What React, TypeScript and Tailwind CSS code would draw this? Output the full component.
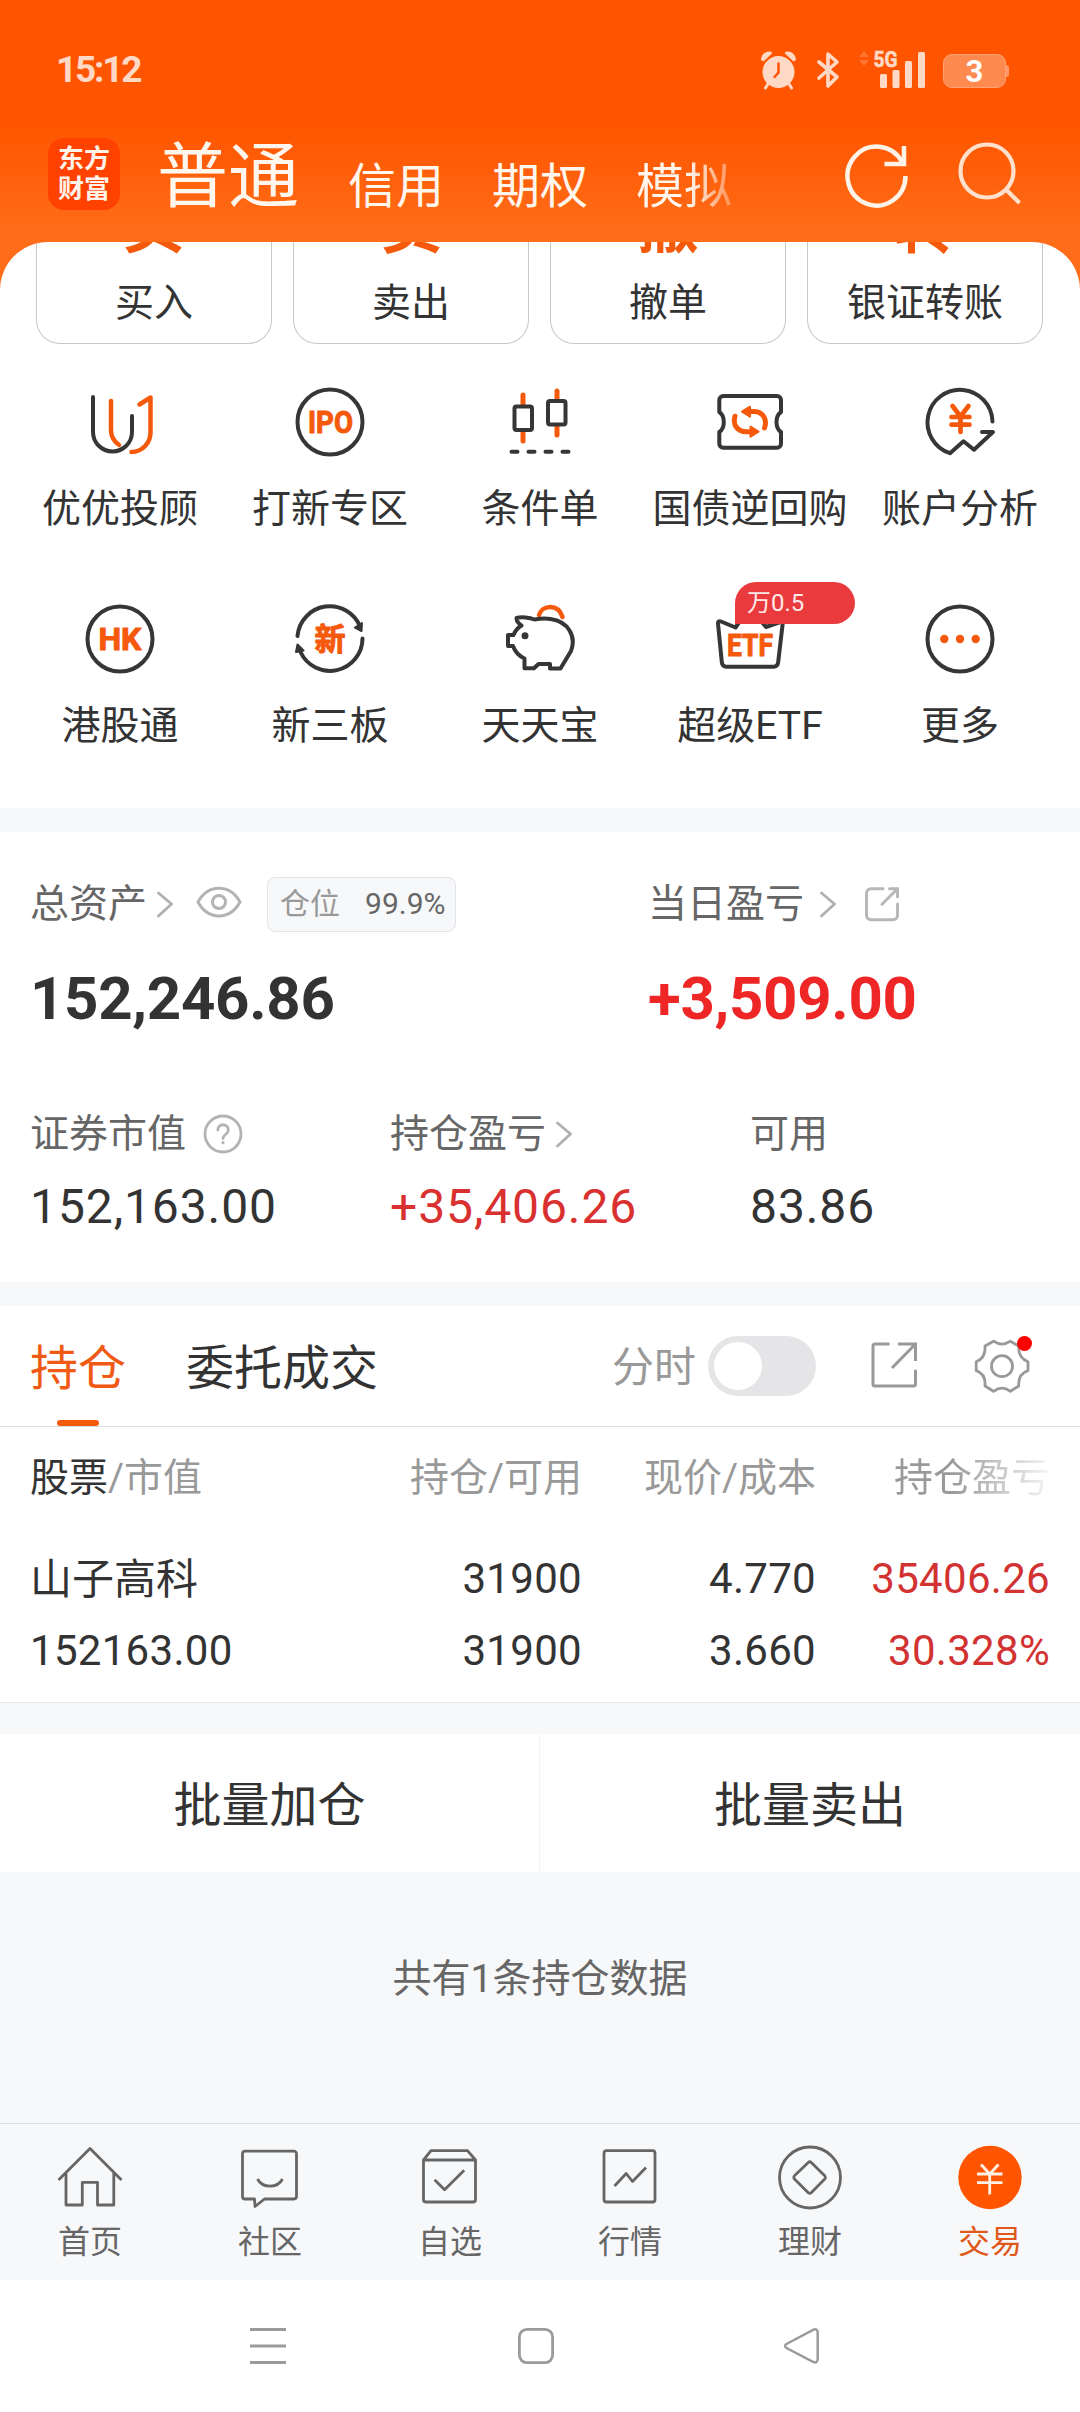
import type { ReactNode } from "react";

const DARK = "#363636";
const ORANGE = "#f55a0c";

interface Entry {
  label: string;
  icon: ReactNode;
  badge?: string;
}

function GridIcon({ children }: { children: ReactNode }) {
  return (
    <svg
      className="w-[72px] h-[72px] overflow-visible"
      viewBox="0 0 72 72"
      fill="none"
      stroke={DARK}
      strokeWidth={4}
      strokeLinecap="round"
      strokeLinejoin="round"
    >
      {children}
    </svg>
  );
}

function IconText({ x, y, w, size, children }: { x: number; y: number; w: number; size: number; children: string }) {
  return (
    <text
      x={x}
      y={y}
      textLength={w}
      lengthAdjust="spacingAndGlyphs"
      fontSize={size}
      fontWeight={700}
      fill={ORANGE}
      stroke={ORANGE}
      strokeWidth={1}
    >
      {children}
    </text>
  );
}

const entries: Entry[] = [
  {
    label: "优优投顾",
    icon: (
      <GridIcon>
        <path d="M9 11v35a19.5 19.5 0 0 0 39 0V30" />
        <g stroke={ORANGE} strokeWidth={4.5}>
          <path d="M27 15v29c0 7 3 11.500 8 15" />
          <path d="M55.500 18.500l11-7V46a19.500 19.500 0 0 1-19 20" />
        </g>
      </GridIcon>
    ),
  },
  {
    label: "打新专区",
    icon: (
      <GridIcon>
        <circle cx="36" cy="36" r="32.500" />
        <IconText x={14} y={47} w={45} size={31}>IPO</IconText>
      </GridIcon>
    ),
  },
  {
    label: "条件单",
    icon: (
      <GridIcon>
        <path d="M19 9v9M19 46v9M53 5v8M53 41v8" stroke={ORANGE} strokeWidth={5} />
        <rect x="10.500" y="20.500" width="17.500" height="23.500" rx="2" />
        <rect x="44" y="15" width="17.500" height="23.500" rx="2" />
        <path d="M7.500 65.700h6M24.500 65.700h6M41.500 65.700h6M58.500 65.700h6" />
      </GridIcon>
    ),
  },
  {
    label: "国债逆回购",
    icon: (
      <GridIcon>
        <path d="M5.300 26V14a4 4 0 0 1 4-4H63a4 4 0 0 1 4 4v12c-6 4-6 16 0 20v11.700a4 4 0 0 1-4 4H9.300a4 4 0 0 1-4-4V46c6-4 6-16 0-20z" />
        <g stroke={ORANGE} strokeWidth={5}>
          <path d="M36 25.500h4c9 0 13.500 8 10.500 16.500" />
          <path d="M37 45.700h-4.500c-9.500 0-14-7.500-11.500-15.500" />
        </g>
        <path d="M28 25.700l8-5v10zM44.500 45.700l-8-5v10z" fill={ORANGE} stroke={ORANGE} strokeWidth={2} />
      </GridIcon>
    ),
  },
  {
    label: "账户分析",
    icon: (
      <GridIcon>
        <path d="M68.500 35.500A32.500 32.500 0 1 0 26 67.200l13.500-12L50 63.700 69 46H58" />
        <path d="M28.500 20l8 10.500 8-10.500M36.500 30.500V46M27.500 31h18M27.500 38.700h18" stroke={ORANGE} strokeWidth={4.700} />
      </GridIcon>
    ),
  },
  {
    label: "港股通",
    icon: (
      <GridIcon>
        <circle cx="36" cy="36" r="32.500" />
        <IconText x={14.500} y={47} w={43} size={31}>HK</IconText>
      </GridIcon>
    ),
  },
  {
    label: "新三板",
    icon: (
      <GridIcon>
        <path d="M3.500 33A32.500 32.500 0 0 1 66 23.500" />
        <path d="M68.500 35.500A32.500 32.500 0 0 1 6.500 49" />
        <path d="M61 24.500l7-4.500-.500 8zM3.500 41.500l6 6-7.500 1.500z" fill={DARK} strokeWidth={2} />
        <IconText x={20.500} y={47} w={31} size={31}>新</IconText>
      </GridIcon>
    ),
  },
  {
    label: "天天宝",
    icon: (
      <GridIcon>
        <path d="M35 12c3-10 19-12 23.500 2" stroke={ORANGE} strokeWidth={4.500} />
        <path d="M12.500 15c5-1.500 13-.500 18 1.500 5-.800 11-1.200 16-.500 18 2.500 26 17.500 20.500 32L56.500 65.500h-10.500V61H34.500L30 65.300h-9.500V55.500C15 53 11 48.500 9 43H4V32h5.500c1.500-4 4-7 8-9.500-3-2-5-4.500-5-7.500z" />
        <circle cx="21" cy="32.700" r="3.500" fill={DARK} stroke="none" />
      </GridIcon>
    ),
  },
  {
    label: "超级ETF",
    badge: "万0.5",
    icon: (
      <GridIcon>
        <path d="M26 18l-4.500 6.500L7 18.500c-2-.800-3.200 0-3 2L7.800 59c.300 3 2 4.700 4.700 4.700h47c2.700 0 4.400-1.700 4.700-4.700L69 18l-17 6-5-6" />
        <IconText x={13} y={53} w={46} size={31}>ETF</IconText>
      </GridIcon>
    ),
  },
  {
    label: "更多",
    icon: (
      <GridIcon>
        <circle cx="36" cy="36" r="32.500" />
        <g fill={ORANGE} stroke="none">
          <circle cx="20.300" cy="36" r="4.200" />
          <circle cx="36" cy="36" r="4.200" />
          <circle cx="51.700" cy="36" r="4.200" />
        </g>
      </GridIcon>
    ),
  },
];

const actions = [
  { glyph: "买", label: "买入" },
  { glyph: "卖", label: "卖出" },
  { glyph: "撤", label: "撤单" },
  { glyph: "转", label: "银证转账" },
];

const navItems: Entry[] = [
  {
    label: "首页",
    icon: <path d="M1.500 36L33 4.500 64.500 36M9 29v32h16.300V38.300h15.200V61h16.300V29" />,
  },
  {
    label: "社区",
    icon: (
      <>
        <path d="M17.500 55H8a2.500 2.500 0 0 1-2.500-2.500v-43A2.500 2.500 0 0 1 8 7.200h49a2.500 2.500 0 0 1 2.500 2.500v43A2.500 2.500 0 0 1 57 55H27.500L18 62.500z" />
        <path d="M20.500 35c5 9.500 20 9.500 25 0" />
      </>
    ),
  },
  {
    label: "自选",
    icon: (
      <>
        <path d="M6.500 16h52v39.500a2.500 2.500 0 0 1-2.500 2.500H9a2.500 2.500 0 0 1-2.500-2.500zL14 6.700h36.500l8 9.300" />
        <path d="M17.600 35.700l10 10 19.600-19.500" />
      </>
    ),
  },
  {
    label: "行情",
    icon: (
      <>
        <rect x="7" y="6.700" width="51" height="51.300" rx="2.500" />
        <path d="M17.500 42l11.700-12.500 6.300 8L49 23.500" />
      </>
    ),
  },
  {
    label: "理财",
    icon: (
      <>
        <circle cx="33" cy="33.500" r="30.500" />
        <path d="M31 18.700L17.700 31.500a2.500 2.500 0 0 0 0 3.800L31 48.500a2.500 2.500 0 0 0 3.500 0l13-13.200a2.500 2.500 0 0 0 0-3.800L34.500 18.700a2.500 2.500 0 0 0-3.500 0z" />
      </>
    ),
  },
  {
    label: "交易",
    icon: (
      <>
        <circle cx="33" cy="33.500" r="31.700" fill="#ff5500" stroke="none" />
        <path d="M24 20.500L32.700 30 41.500 20.500M32.700 30v20.500M20 30h25.500M20 38.700h25.500" stroke="#fff1e6" strokeWidth={2.800} />
      </>
    ),
  },
];

function Chevron() {
  return (
    <svg className="w-4 h-7" viewBox="0 0 16 28" fill="none" stroke="#b0b0b0" strokeWidth={2.800} strokeLinecap="round">
      <path d="M1.500 3L14.500 14 1.500 26" />
    </svg>
  );
}

function StatusBar() {
  return (
    <div className="h-[93px] pl-14 pr-[71px] pt-[50px] flex items-start justify-between text-[#ffd9c6]">
      <span className="text-[37px] leading-[40px] font-bold tracking-[-2.200px]">15:12</span>
      <div className="flex items-start h-10">
        <svg className="w-[38px] h-10" viewBox="0 0 38 40" fill="currentColor">
          <circle cx="18.500" cy="22" r="16" />
          <path d="M1 10C1.500 4 5.500 1 10.500 1.500L12.500 3 3.500 11.500zM36 10C35.500 4 31.500 1 26.500 1.500L24.500 3l9 8.500z" />
          <path d="M8.500 33l-3 5M28.500 33l3 5" stroke="currentColor" strokeWidth="3" strokeLinecap="round" />
          <path d="M18.500 13.500v9l-4 4.500" fill="none" stroke="#ff5500" strokeWidth="2.500" strokeLinecap="round" />
        </svg>
        <svg className="w-[22px] h-10 ml-[19px]" viewBox="0 0 22 40" fill="none" stroke="currentColor" strokeWidth="3.600">
          <path d="M2 12l18 15-9 9V4l9 8L2 28" strokeLinejoin="round" strokeLinecap="round" />
        </svg>
        <svg className="w-[68px] h-10 ml-[19px]" viewBox="0 0 68 40" fill="currentColor">
          <path d="M6 1l5 6H1zM6 16l5-6H1z" opacity=".25" />
          <text
            x="15.500"
            y="17"
            fontSize="22"
            fontWeight="700"
            textLength="24"
            lengthAdjust="spacingAndGlyphs"
            stroke="currentColor"
            strokeWidth=".600"
          >
            5G
          </text>
          <rect x="22" y="24" width="7" height="14" rx="1.500" />
          <rect x="34.500" y="20" width="7" height="18" rx="1.500" />
          <rect x="47" y="11" width="7" height="27" rx="1.500" />
          <rect x="60" y="2" width="7" height="36" rx="1.500" />
        </svg>
        <div className="flex items-center ml-[17px] mt-1">
          <div className="w-[63px] h-[34px] rounded-[9px] bg-[#ff8a50] border border-[#ffa274] flex items-center justify-center text-white text-[31px] leading-none font-bold">
            3
          </div>
          <div className="w-[3px] h-3 bg-[#ff9a68] rounded-r-sm" />
        </div>
      </div>
    </div>
  );
}

function TopBar() {
  return (
    <div className="h-[149px] pl-12 flex items-start">
      <div className="mt-[45px] w-[72px] h-[72px] rounded-2xl bg-[#ff4200] flex flex-col items-center justify-center text-[26px] leading-[30px] font-bold text-[#fff3ea]">
        <span>东方</span>
        <span>财富</span>
      </div>
      <div className="ml-[37px] w-[601px] flex items-start gap-12 text-[48px] text-[#fff6ee]">
        <span className="mt-[46px] w-[143px] text-[71px] leading-[76px]">普通</span>
        <span className="mt-[68px] leading-[52px]">信用</span>
        <span className="mt-[68px] leading-[52px]">期权</span>
        <span className="mt-[68px] leading-[52px] bg-[linear-gradient(90deg,#fff6ee_55%,rgba(255,200,170,0.450))] bg-clip-text text-transparent">
          模拟
        </span>
      </div>
      <svg className="w-[66px] h-[66px] mt-[49px] ml-[86px] -mr-px" viewBox="0 0 66 66" fill="none" stroke="#fff3e8" strokeWidth={4.500}>
        <path d="M61.500 34A29 29.500 0 1 1 58 20" />
        <path d="M60 4v18H40.500" />
      </svg>
      <svg className="w-[66px] h-[66px] mt-[49px] ml-[47px]" viewBox="0 0 66 66" fill="none" stroke="#ffe0cc" strokeWidth={4.200}>
        <circle cx="31" cy="29" r="26.500" />
        <path d="M50 47.500L63.500 61" />
      </svg>
    </div>
  );
}

function ShortcutPanel() {
  return (
    <div className="h-[566px] rounded-t-[48px] bg-white overflow-hidden">
      <div className="px-9 flex gap-[21px]">
        {actions.map((a) => (
          <div
            key={a.label}
            className="w-[236px] h-[102px] border-x border-b border-[#c8c8c8] rounded-b-3xl overflow-hidden flex flex-col items-center justify-end pb-[20px]"
          >
            <span className="text-[62px] leading-none font-bold text-[#f55a0c] shrink-0">{a.glyph}</span>
            <span className="mt-[25px] text-[39px] leading-10 text-[#333333] shrink-0">{a.label}</span>
          </div>
        ))}
      </div>
      <div className="mt-[42px] px-[15px] grid grid-cols-5">
        {entries.map((e) => (
          <div key={e.label} className="h-[217px] relative flex flex-col items-center">
            {e.icon}
            <span className="mt-[31px] text-[39px] leading-10 text-[#333333] whitespace-nowrap">{e.label}</span>
            {e.badge && (
              <span className="absolute left-[90px] top-[-21px] w-[120px] h-[42px] pl-3 rounded-[21px] rounded-bl-none bg-[#e93b3d] text-[24px] leading-[42px] text-[#ffe9e9]">
                {e.badge}
              </span>
            )}
          </div>
        ))}
      </div>
    </div>
  );
}

function Assets() {
  return (
    <section className="h-[450px] pt-[45px] pl-[30px] text-[#666666]">
      <div className="flex h-[54px] text-[39px] leading-[54px]">
        <div className="w-[618px] flex items-center">
          <span>总资产</span>
          <span className="ml-[10px]"><Chevron /></span>
          <svg className="w-[46px] h-8 ml-[23px] -mt-1" viewBox="0 0 46 32" fill="none" stroke="#b3b3b3" strokeWidth={3}>
            <path d="M2 16C12-2.500 34-2.500 44 16 34 34.500 12 34.500 2 16z" strokeLinejoin="round" />
            <circle cx="23" cy="16" r="6.500" />
          </svg>
          <div className="ml-[25px] w-[189px] h-[55px] pl-3 rounded-lg border border-[#e4e4e6] bg-[#f7f8fa] flex items-center text-[30px] leading-[52px]">
            <span className="text-[#999999]">仓位</span>
            <span className="ml-[25px]">99.9%</span>
          </div>
        </div>
        <div className="flex items-center">
          <span>当日盈亏</span>
          <span className="ml-[16px]"><Chevron /></span>
          <svg className="w-10 h-10 ml-[26px]" viewBox="0 0 40 40" fill="none" stroke="#b8b8b8" strokeWidth={3} strokeLinecap="round">
            <path d="M21 4.700H9a4.500 4.500 0 0 0-4.500 4.500v22A4.500 4.500 0 0 0 9 35.700h22a4.500 4.500 0 0 0 4.500-4.500V20" />
            <path d="M27.500 4.700h8v8M20 20.300L35 5.200" />
          </svg>
        </div>
      </div>
      <div className="flex mt-8 text-[60px] leading-[72px] font-bold tracking-[-0.300px]">
        <span className="w-[618px] text-[#333333]">152,246.86</span>
        <span className="text-[#ee2626]">+3,509.00</span>
      </div>
      <div className="flex mt-[72px] text-[39px] leading-[54px]">
        <div className="w-[360px]">
          <div className="flex items-center h-[54px]">
            证券市值
            <svg className="w-10 h-10 ml-[17px] -mt-px" viewBox="0 0 40 40" fill="none" stroke="#b3b3b3" strokeWidth={2.800} strokeLinecap="round">
              <circle cx="20" cy="20" r="18" />
              <path d="M14.800 16c0-7 10.500-7 10.500 0 0 4.500-5.300 4.500-5.300 8.500" />
              <circle cx="20" cy="28.700" r="1.600" fill="#b3b3b3" stroke="none" />
            </svg>
          </div>
          <div className="mt-[14px] text-[48px] leading-[64px] tracking-[0.900px] text-[#333333]">152,163.00</div>
        </div>
        <div className="w-[360px]">
          <div className="flex items-center h-[54px]">
            持仓盈亏
            <span className="ml-[10px]"><Chevron /></span>
          </div>
          <div className="mt-[14px] text-[48px] leading-[64px] tracking-[0.900px] text-[#d93030]">+35,406.26</div>
        </div>
        <div>
          <div>可用</div>
          <div className="mt-[14px] text-[48px] leading-[64px] tracking-[0.900px] text-[#333333]">83.86</div>
        </div>
      </div>
    </section>
  );
}

function HoldingTabs() {
  return (
    <div className="h-[121px] border-b border-[#dddddd] pl-[30px] flex text-[48px] leading-[125px]">
      <div className="flex flex-col items-center h-[120px] text-[#f05a14]">
        <span className="h-[114px]">持仓</span>
        <span className="w-[42px] h-1.5 rounded-full bg-[#f55a0c]" />
      </div>
      <span className="ml-[60px] h-[120px] text-[#333333]">委托成交</span>
      <div className="ml-auto mr-12 flex items-center h-[120px]">
        <span className="text-[42px] leading-[60px] pt-[3px] text-[#999999]">分时</span>
        <div className="ml-3 w-[108px] h-[60px] rounded-full bg-[#e5e5e7] p-1.5">
          <div className="size-12 rounded-full bg-white" />
        </div>
        <svg className="w-[54px] h-[54px] ml-[52px]" viewBox="0 0 54 54" fill="none" stroke="#999999" strokeWidth={3}>
          <path d="M21.500 5H7a2 2 0 0 0-2 2v38a2 2 0 0 0 2 2h38.500a2 2 0 0 0 2-2V30.700" />
          <path d="M30 5h17.500v17M24 29L46.500 6" />
        </svg>
        <div className="relative ml-[50px]">
          <svg className="w-[60px] h-[60px]" viewBox="0 0 60 60" fill="none" stroke="#999999" strokeWidth={2.800} strokeLinejoin="round">
            <path d="M21.500 5.200Q30 11 38.400 5.200L46.700 10Q46 22 56 25.700v9Q46 38 46.700 50L38.400 55.300Q30 49 21.500 55.300L13 50Q14 38 4.200 34.700v-9Q14 22 13 10Z" />
            <circle cx="30" cy="30.200" r="10.500" />
          </svg>
          <span className="absolute top-0 right-0 size-[15px] rounded-full bg-[#ff0000]" />
        </div>
      </div>
    </div>
  );
}

function Holdings() {
  return (
    <div className="h-[276px] px-[30px] border-b border-[#e8e9eb]">
      <div className="pt-[24px] grid grid-cols-[318px_234px_234px_234px] text-right text-[39px] leading-[54px] text-[#999999]">
        <span className="text-left">
          <span className="text-[#333333]">股票</span>/市值
        </span>
        <span>持仓/可用</span>
        <span>现价/成本</span>
        <span className="bg-[linear-gradient(90deg,#999999_58%,#f6f6f6)] bg-clip-text text-transparent">持仓盈亏</span>
      </div>
      <div className="mt-[38px] grid grid-cols-[318px_234px_234px_234px] text-right text-[42px] leading-[72px] tracking-[0.300px] text-[#333333]">
        <span className="text-left tracking-normal h-[72px] leading-[73px]">山子高科</span>
        <span>31900</span>
        <span>4.770</span>
        <span className="text-[#d23232]">35406.26</span>
        <span className="text-left">152163.00</span>
        <span>31900</span>
        <span>3.660</span>
        <span className="text-[#d23232]">30.328%</span>
      </div>
    </div>
  );
}

function TabBar() {
  return (
    <nav className="h-[157px] border-t border-[#dfe0e2] bg-[#f7f8fa] grid grid-cols-6">
      {navItems.map((item, i) => (
        <div key={item.label} className="flex flex-col items-center pt-5">
          <svg className="w-[66px] h-[66px] shrink-0" viewBox="0 0 66 66" fill="none" stroke="#666666" strokeWidth={2.800} strokeLinejoin="round">
            {item.icon}
          </svg>
          <span className={`mt-3 text-[32px] leading-10 ${i === 5 ? "text-[#e0591a]" : "text-[#666666]"}`}>
            {item.label}
          </span>
        </div>
      ))}
    </nav>
  );
}

function SystemBar() {
  return (
    <div className="h-[132px] bg-white flex items-center pl-[248px]">
      <svg className="w-10 h-10" viewBox="0 0 40 40" stroke="#9a9a9a" strokeWidth={3}>
        <path d="M2 3.500h36M2 20h36M2 36.500h36" />
      </svg>
      <svg className="w-10 h-10 ml-[228px]" viewBox="0 0 40 40" fill="none" stroke="#9a9a9a" strokeWidth={2.800}>
        <rect x="3.400" y="3.400" width="33.200" height="33.200" rx="7.500" />
      </svg>
      <svg className="w-10 h-10 ml-[226px]" viewBox="0 0 40 40" fill="none" stroke="#9a9a9a" strokeWidth={2.500}>
        <path d="M4.500 18L31.500 3.600Q35.500 2.500 35.700 6.500V33Q35.500 37.500 31.500 36L4.500 22Q1.500 20 4.500 18z" />
      </svg>
    </div>
  );
}

export default function App() {
  return (
    <div className="w-[1080px] h-[2412px] overflow-hidden bg-white font-['Roboto','Noto_Sans_CJK_SC',sans-serif]">
      <div className="bg-[linear-gradient(180deg,#ff5500_0,#ff5500_125px,#ff6d18_235px,#ff6d18_100%)]">
        <StatusBar />
        <TopBar />
        <ShortcutPanel />
      </div>
      <div className="h-6 bg-[#f7f8fa]" />
      <Assets />
      <div className="h-6 bg-[#f7f8fa]" />
      <HoldingTabs />
      <Holdings />
      <div className="h-[31px] bg-[#f7f8fa]" />
      <div className="h-[138px] flex text-[48px] leading-[143px] text-center text-[#333333] overflow-hidden">
        <div className="w-[540px] border-r border-[#f5f5f6]">批量加仓</div>
        <div className="flex-1">批量卖出</div>
      </div>
      <div className="h-[251px] bg-[#f7f8fa] text-center text-[39px] leading-[214px] text-[#666666]">
        共有1条持仓数据
      </div>
      <TabBar />
      <SystemBar />
    </div>
  );
}
